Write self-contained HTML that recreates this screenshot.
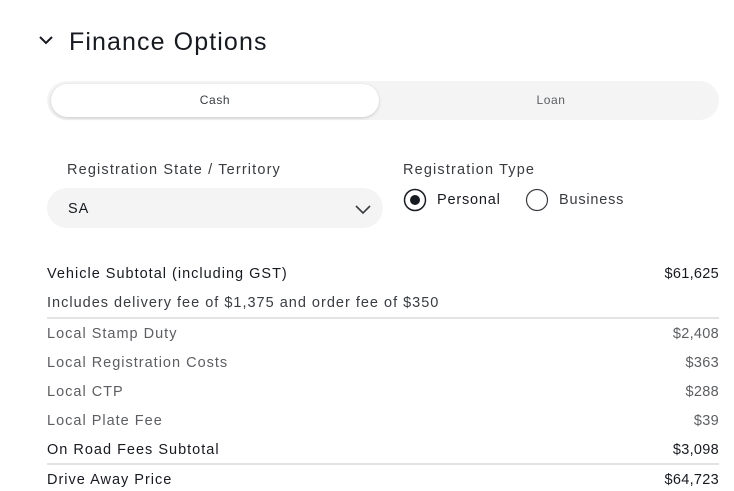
<!DOCTYPE html>
<html><head><style>
body{margin:0;width:734px;height:491px;background:#fff;font-family:"Liberation Sans",sans-serif;position:relative;overflow:hidden;color:#171a20}
.a{position:absolute}
.r{position:absolute;left:47px;width:672px;font-size:14.5px;letter-spacing:1px;display:flex;justify-content:space-between;line-height:18px}
.r span.v{letter-spacing:0.3px}
.g{color:#5c5e62}
</style></head><body>
<svg class="a" style="left:38px;top:34px" width="16" height="12" viewBox="0 0 16 12"><path d="M2 3 L8 9 L14 3" fill="none" stroke="#171a20" stroke-width="2"/></svg>
<div class="a" style="left:69px;top:27px;font-size:25px;letter-spacing:1.1px;line-height:30px;color:#171a20">Finance Options</div>
<div class="a" style="left:47px;top:81px;width:672px;height:39px;border-radius:20px;background:#f4f4f4"></div>
<div class="a" style="left:51px;top:84px;width:328px;height:33px;border-radius:17px;background:#fff;box-shadow:0 1px 3px rgba(0,0,0,.18);font-size:12px;letter-spacing:0.6px;color:#393c41;text-align:center;line-height:33px">Cash</div>
<div class="a" style="left:383px;top:84px;width:336px;height:33px;font-size:12px;letter-spacing:0.6px;color:#5c5e62;text-align:center;line-height:33px">Loan</div>
<div class="a" style="left:67px;top:162px;font-size:14.5px;letter-spacing:1.15px;color:#393c41">Registration State / Territory</div>
<div class="a" style="left:47px;top:188px;width:336px;height:40px;border-radius:20px;background:#f4f4f4"></div>
<div class="a" style="left:68px;top:201px;font-size:14.5px;letter-spacing:1px;color:#171a20">SA</div>
<svg class="a" style="left:354px;top:203px" width="18" height="12" viewBox="0 0 18 12"><path d="M2 3 L9 10 L16 3" fill="none" stroke="#393c41" stroke-width="1.6"/></svg>
<div class="a" style="left:403px;top:162px;font-size:14.5px;letter-spacing:1.15px;color:#393c41">Registration Type</div>
<svg class="a" style="left:403px;top:188px" width="24" height="24"><circle cx="12" cy="12" r="10.5" fill="#fff" stroke="#171a20" stroke-width="1.5"/><circle cx="12" cy="12" r="5" fill="#171a20"/></svg>
<div class="a" style="left:437px;top:192px;font-size:14.5px;letter-spacing:0.8px;color:#171a20">Personal</div>
<svg class="a" style="left:525px;top:188px" width="24" height="24"><circle cx="12" cy="12" r="10.5" fill="#fff" stroke="#393c41" stroke-width="1.2"/></svg>
<div class="a" style="left:559px;top:192px;font-size:14.5px;letter-spacing:0.8px;color:#393c41">Business</div>
<div class="r" style="top:265px"><span>Vehicle Subtotal (including GST)</span><span class="v">$61,625</span></div>
<div class="r" style="top:294px;color:#393c41"><span>Includes delivery fee of $1,375 and order fee of $350</span></div>
<div class="a" style="left:47px;top:317px;width:672px;height:2px;background:#e2e3e3"></div>
<div class="r g" style="top:325px"><span>Local Stamp Duty</span><span class="v">$2,408</span></div>
<div class="r g" style="top:354px"><span>Local Registration Costs</span><span class="v">$363</span></div>
<div class="r g" style="top:383px"><span>Local CTP</span><span class="v">$288</span></div>
<div class="r g" style="top:412px"><span>Local Plate Fee</span><span class="v">$39</span></div>
<div class="r" style="top:441px"><span>On Road Fees Subtotal</span><span class="v">$3,098</span></div>
<div class="a" style="left:47px;top:463px;width:672px;height:2px;background:#e2e3e3"></div>
<div class="r" style="top:471px"><span>Drive Away Price</span><span class="v">$64,723</span></div>
</body></html>
